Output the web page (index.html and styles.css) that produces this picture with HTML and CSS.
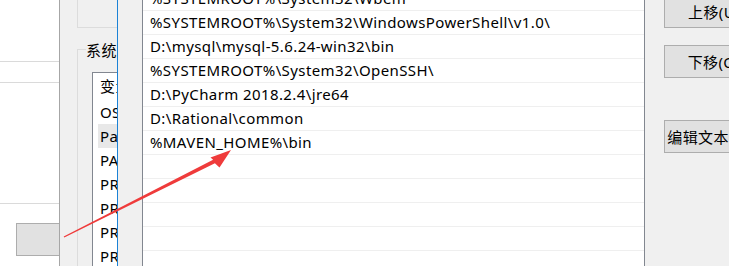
FILE: index.html
```html
<!DOCTYPE html>
<html lang="zh-CN">
<head>
    <meta charset="UTF-8">
    <title>编辑环境变量</title>
    <link rel="stylesheet" href="styles.css">
</head>
<body>
    <div class="desk">
        <!-- window in the back: system properties -->
        <div class="sysprops">
            <div class="rule rule-a"></div>
            <div class="rule rule-b"></div>
            <div class="rule rule-c"></div>
            <button class="btn btn-env">环境变量(N)...</button>
        </div>

        <!-- environment variables window -->
        <div class="envwin">
            <div class="group-user"></div>
            <div class="group">
                <div class="group-title"><span>系统变量(S)</span></div>
                <div class="group-body">
                    <div class="listview">
                        <div class="lv-head">变量</div>
                        <div class="lv-row">OS</div>
                        <div class="lv-row selected">Path</div>
                        <div class="lv-row">PATHEXT</div>
                        <div class="lv-row">PROCESSOR_ARCHITECTURE</div>
                        <div class="lv-row">PROCESSOR_IDENTIFIER</div>
                        <div class="lv-row">PROCESSOR_LEVEL</div>
                        <div class="lv-row">PROCESSOR_REVISION</div>
                    </div>
                </div>
            </div>
        </div>

        <!-- edit environment variable window (front) -->
        <div class="editwin">
            <div class="pathlist">
                <div class="path-row">%SYSTEMROOT%\System32\Wbem</div>
                <div class="path-row">%SYSTEMROOT%\System32\WindowsPowerShell\v1.0\</div>
                <div class="path-row">D:\mysql\mysql-5.6.24-win32\bin</div>
                <div class="path-row">%SYSTEMROOT%\System32\OpenSSH\</div>
                <div class="path-row">D:\PyCharm 2018.2.4\jre64</div>
                <div class="path-row">D:\Rational\common</div>
                <div class="path-row">%MAVEN_HOME%\bin</div>
                <div class="path-row"></div>
                <div class="path-row"></div>
                <div class="path-row"></div>
                <div class="path-row"></div>
                <div class="path-row"></div>
            </div>
            <div class="actions">
                <button class="btn btn-up">上移(U)</button>
                <button class="btn btn-down">下移(O)</button>
                <button class="btn btn-edit">编辑文本(T)...</button>
            </div>
        </div>
    </div>

    <svg class="arrow" width="729" height="266" viewBox="0 0 729 266">
        <polygon fill="#ef3b3b" points="63.7,236.4 213.1,159.7 210.5,157.5 231,150 219.5,167.5 214.9,163.3 64.3,237.6"/>
    </svg>
</body>
</html>
```

FILE: styles.css
```css
/* Reset */
* {
    margin: 0;
    padding: 0;
    box-sizing: border-box;
}

body {
    font-family: "Noto Sans", "Noto Sans CJK SC", sans-serif;
    font-size: 15px;
    letter-spacing: 0.4px;
    color: #000;
    height: 266px;
    overflow: hidden;
    position: relative;
    background: #fff;
}

.desk {
    display: flex;
    height: 266px;
}

/* Buttons */
.btn {
    display: block;
    font-family: inherit;
    font-size: 15px;
    letter-spacing: 0.4px;
    color: #000;
    background: #e1e1e1;
    border: 1px solid #adadad;
    height: 33px;
    flex: none;
    white-space: nowrap;
}

/* System properties window (back) */
.sysprops {
    width: 59px;
    flex: none;
    background: #fff;
    overflow: hidden;
}

.rule {
    height: 1px;
    width: 59px;
    background: #dadada;
}

.rule-a { margin-top: 61px; }
.rule-b { margin-top: 20px; }
.rule-c { margin-top: 120px; }

.btn-env {
    margin-top: 19px;
    margin-left: 16px;
    width: 120px;
    color: transparent;
}

/* Environment variables window */
.envwin {
    width: 58px;
    flex: none;
    background: #f0f0f0;
    border-left: 1px solid #a6a6a6;
    overflow: hidden;
}

.group-user {
    width: 400px;
    height: 28px;
    margin-left: 17px;
    border-left: 1px solid #dcdcdc;
    border-bottom: 1px solid #dcdcdc;
}

.group {
    width: 400px;
    margin-left: 17px;
    margin-top: 12px;
}

.group-title {
    display: flex;
    height: 20px;
    white-space: nowrap;
}

.group-title::before {
    content: "";
    width: 8px;
    height: 10px;
    align-self: flex-end;
    border-top: 1px solid #dcdcdc;
    border-left: 1px solid #dcdcdc;
}

.group-title span {
    line-height: 20px;
}

.group-body {
    border-left: 1px solid #dcdcdc;
    padding: 12px 0 0 14px;
}

.listview {
    background: #fff;
    border-top: 1px solid #828790;
    border-left: 1px solid #828790;
    height: 300px;
    white-space: nowrap;
}

.lv-head {
    height: 27px;
    line-height: 27px;
    padding-left: 7px;
}

.lv-row {
    height: 24px;
    line-height: 24px;
    margin-left: 5px;
    padding-left: 2px;
}

.lv-row.selected {
    background: #e8e8e8;
}

/* Edit environment variable window (front) */
.editwin {
    flex: 1;
    display: flex;
    background: #f0f0f0;
    border-left: 1px solid #1b82d6;
    padding-left: 24px;
    overflow: hidden;
}

.pathlist {
    width: 503px;
    flex: none;
    margin-top: -13px;
    background: #fff;
    border-left: 1px solid #828790;
    border-right: 1px solid #828790;
}

.path-row {
    height: 24px;
    line-height: 23px;
    padding-left: 7px;
    border-bottom: 1px solid #efefef;
    white-space: nowrap;
}

.actions {
    flex: none;
    margin-left: 19px;
    margin-top: -5px;
}

.actions .btn {
    width: 100px;
}

.btn-down { margin-top: 17px; }
.btn-edit { margin-top: 42px; }

/* Annotation arrow over the screenshot */
.arrow {
    position: absolute;
    top: 0;
    left: 0;
    pointer-events: none;
}
```
